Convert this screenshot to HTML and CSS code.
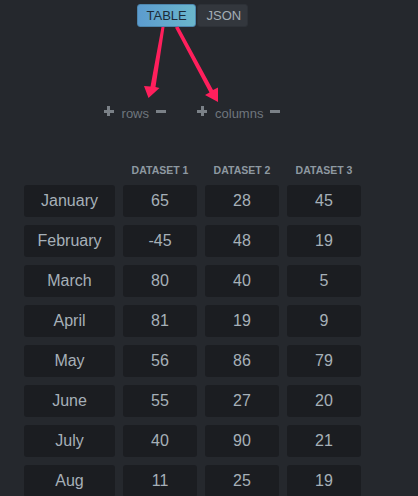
FILE: index.html
```html
<!DOCTYPE html>
<html>
<head>
<meta charset="utf-8">
<link rel="stylesheet" href="styles.css">
</head>
<body>
<div class="wrap">
  <div class="toggle">
    <button class="btn active">TABLE</button>
    <button class="btn">JSON</button>
  </div>
  <div class="controls">
    <div class="ctl"><span class="plus"></span><span class="lbl">rows</span><span class="minus"></span></div>
    <div class="ctl"><span class="plus"></span><span class="lbl">columns</span><span class="minus"></span></div>
  </div>
  <div class="grid">
    <div class="head"></div>
    <div class="head">DATASET 1</div>
    <div class="head">DATASET 2</div>
    <div class="head">DATASET 3</div>

    <div class="cell">January</div><div class="cell">65</div><div class="cell">28</div><div class="cell">45</div>
    <div class="cell">February</div><div class="cell">-45</div><div class="cell">48</div><div class="cell">19</div>
    <div class="cell">March</div><div class="cell">80</div><div class="cell">40</div><div class="cell">5</div>
    <div class="cell">April</div><div class="cell">81</div><div class="cell">19</div><div class="cell">9</div>
    <div class="cell">May</div><div class="cell">56</div><div class="cell">86</div><div class="cell">79</div>
    <div class="cell">June</div><div class="cell">55</div><div class="cell">27</div><div class="cell">20</div>
    <div class="cell">July</div><div class="cell">40</div><div class="cell">90</div><div class="cell">21</div>
    <div class="cell">Aug</div><div class="cell">11</div><div class="cell">25</div><div class="cell">19</div>
  </div>
</div>
<svg class="arrows" width="418" height="496" viewBox="0 0 418 496">
  <polygon points="161.5,27 164.5,27 155.5,87 159.5,88 148.5,98 144,86 150.5,86.5" fill="#ff1f5c"/>
  <polygon points="175,27.5 178.5,26.5 213,90 218,87.5 218,102 205,95 209.5,92.5" fill="#ff1f5c"/>
</svg>
</body>
</html>
```

FILE: styles.css
```css
html, body {
  margin: 0;
  padding: 0;
  background: #25282d;
  height: 100%;
  overflow: hidden;
}
body {
  font-family: "Liberation Sans", Arial, sans-serif;
  position: relative;
}
.wrap {
  padding-left: 24px;
  width: 337px;
}
.toggle {
  display: flex;
  justify-content: center;
  gap: 1px;
  padding-top: 4px;
  padding-right: 1px;
}
.btn {
  font-family: "Liberation Sans", Arial, sans-serif;
  font-size: 13px;
  height: 23px;
  padding: 0 9px;
  border: 1px solid #2d3137;
  border-radius: 3px;
  background: #33373d;
  color: #a3adb5;
  line-height: 21px;
}
.btn.active {
  width: 59px;
  background: linear-gradient(90deg, #5c9ccf, #6ab6cb);
  border-color: #4d86ad;
  color: #1d2b38;
}
.btn:not(.active) {
  width: 51px;
}
.controls {
  display: flex;
  justify-content: center;
  gap: 31px;
  margin-top: 79px;
  height: 14px;
  align-items: flex-start;
  padding-right: 1px;
}
.ctl {
  display: flex;
  align-items: flex-start;
  gap: 8px;
}
.plus {
  position: relative;
  width: 10px;
  height: 10px;
}
.plus::before, .plus::after {
  content: "";
  position: absolute;
  background: #7b8187;
}
.plus::before {
  left: 0;
  top: 3.5px;
  width: 10px;
  height: 3px;
}
.plus::after {
  left: 3.5px;
  top: 0;
  width: 3px;
  height: 10px;
}
.minus {
  width: 10px;
  height: 3px;
  margin-top: 3.5px;
  margin-left: -1px;
  background: #7b8187;
}
.lbl {
  color: #6f767d;
  font-size: 13px;
  line-height: 14px;
  margin-top: 1px;
}
.grid {
  display: grid;
  grid-template-columns: 91px repeat(3, 74px);
  column-gap: 8px;
  row-gap: 8px;
  margin-top: 43px;
}
.head {
  text-align: center;
  font-size: 10.5px;
  font-weight: bold;
  color: #8e99a1;
  height: 14px;
  line-height: 14px;
}
.cell {
  background: #1b1d21;
  border-radius: 3px;
  height: 32px;
  line-height: 32px;
  text-align: center;
  color: #a6b0b8;
  font-size: 16px;
}
.arrows {
  position: absolute;
  left: 0;
  top: 0;
  pointer-events: none;
}
```
